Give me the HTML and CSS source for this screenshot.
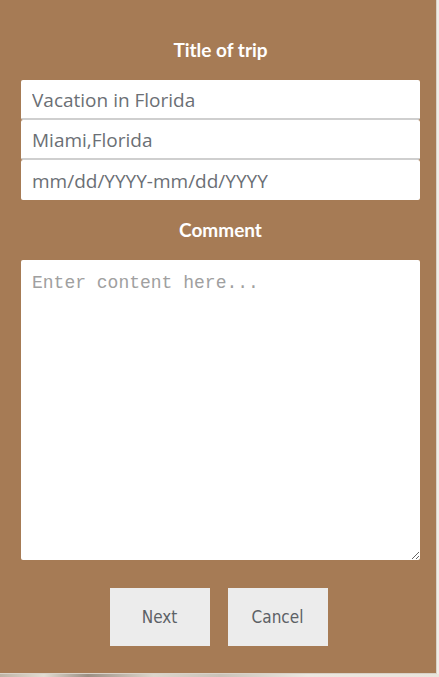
FILE: index.html
```html
<!DOCTYPE html>
<html>
<head>
<meta charset="utf-8">
<link rel="stylesheet" href="styles.css">
</head>
<body>
<div class="panel">
  <h2 class="label">Title of trip</h2>
  <div class="fields">
    <input class="field" type="text" value="Vacation in Florida">
    <input class="field" type="text" value="Miami,Florida">
    <input class="field" type="text" value="mm/dd/YYYY-mm/dd/YYYY">
  </div>
  <h2 class="label comment">Comment</h2>
  <textarea class="area" placeholder="Enter content here..."></textarea>
  <div class="buttons">
    <button class="btn">Next</button>
    <button class="btn">Cancel</button>
  </div>
</div>
<div class="strip"></div>
</body>
</html>
```
FILE: styles.css
```css
html, body {
  margin: 0;
  padding: 0;
}
body {
  width: 439px;
  height: 677px;
  background: #f1ede6;
  overflow: hidden;
}
.panel {
  box-sizing: border-box;
  width: 437px;
  height: 674px;
  background: #a67b55;
  border: 1px solid #d9d2c8;
  border-top: none;
  border-left: none;
  padding: 0 16px 0 21px;
  display: flex;
  flex-direction: column;
  align-items: stretch;
}
.label {
  margin: 0;
  text-align: center;
  font-family: Lato, sans-serif;
  font-weight: 700;
  font-size: 19px;
  color: #ffffff;
  line-height: 22px;
}
.panel > .label:first-child {
  margin-top: 39px;
  margin-bottom: 19px;
}
.fields {
  display: flex;
  flex-direction: column;
  width: 399px;
}
.field {
  box-sizing: border-box;
  height: 40px;
  width: 399px;
  margin: 0;
  border: none;
  border-bottom: 2px solid #cfcfcf;
  border-radius: 2px;
  background: #fff;
  padding: 2px 11px 0;
  font-family: "Open Sans", sans-serif;
  font-size: 19px;
  color: #6b6f75;
  outline: none;
}
.field:last-child {
  border-bottom: none;
}
.comment {
  margin-top: 19px;
  margin-bottom: 19px;
}
.area {
  box-sizing: border-box;
  width: 399px;
  height: 300px;
  margin: 0;
  border: none;
  border-radius: 2px;
  background: #fff;
  padding: 13px 11px 11px;
  font-family: "Liberation Mono", monospace;
  font-size: 18px;
  color: #888;
  outline: none;
  resize: vertical;
}
.area::placeholder {
  color: #a0a0a0;
}
.buttons {
  display: flex;
  justify-content: center;
  gap: 18px;
  margin-top: 28px;
  padding-right: 4px;
  width: 399px;
  box-sizing: border-box;
}
.btn {
  width: 100px;
  height: 58px;
  border: none;
  background: #ececec;
  font-family: "DejaVu Sans Condensed", "DejaVu Sans", sans-serif;
  font-size: 17px;
  color: #5c6166;
  padding: 0;
}
.strip {
  height: 3px;
  background: linear-gradient(90deg, #bdb3a5 0%, #e3ddd3 10%, #9a8f83 20%, #ddd6cc 35%, #c9c2b8 50%, #ece7e0 70%, #e9e4dc 100%);
}
```
